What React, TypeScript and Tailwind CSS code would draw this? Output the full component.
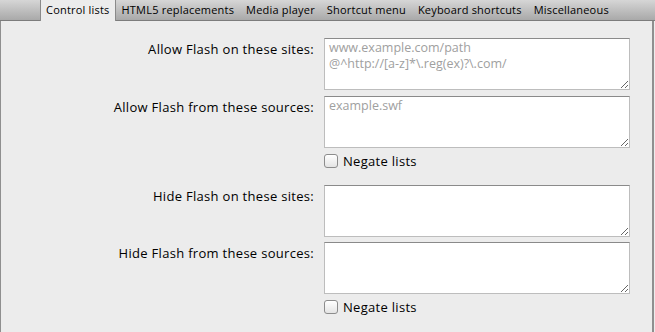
import React from "react";

const TABS = [
  "Control lists",
  "HTML5 replacements",
  "Media player",
  "Shortcut menu",
  "Keyboard shortcuts",
  "Miscellaneous",
];

const FONT = "font-['Open_Sans','Noto_Sans',sans-serif]";

function Field({ label, placeholder }: { label: string; placeholder?: string }) {
  return (
    <div className="flex items-start gap-[10px]">
      <label className="w-[313px] pt-[2px] text-right text-[13px] text-black leading-[18px] tracking-[0.3px]">
        {label}
      </label>
      <textarea
        placeholder={placeholder}
        className="w-[306px] h-[52px] bg-white border border-[#bdbdbd] border-t-[#8a8a8a] px-[4px] py-[1px] text-[12.5px] leading-[16px] text-black placeholder-[#a0a0a0] outline-none"
      />
    </div>
  );
}

function Negate() {
  return (
    <div className="flex items-center gap-[5px] pl-[323px]">
      <span className="w-[14px] h-[14px] rounded-[3px] border border-[#8c8c8c] bg-gradient-to-b from-white to-[#e4e4e4] shadow-[inset_0_1px_0_#fff]" />
      <span className="text-[13px] leading-[16px] text-black tracking-[0.3px]">Negate lists</span>
    </div>
  );
}

export default function App() {
  return (
    <div className={`w-[655px] h-[332px] overflow-hidden bg-[#ececec] ${FONT}`}>
      {/* tab bar */}
      <div className="flex h-[21px] bg-gradient-to-b from-[#d6d6d6] to-[#a9a9a9] border-b border-[#7c7c7c] pl-[40px]">
        {TABS.map((t, i) => (
          <div
            key={t}
            className={
              i === 0
                ? "h-[21px] px-[5px] bg-[#ececec] border-x border-[#8a8a8a] text-[11px] leading-[20px] tracking-[0.2px] text-black"
                : "h-[20px] px-[6px] text-[11px] leading-[20px] tracking-[0.2px] text-black"
            }
          >
            {t}
          </div>
        ))}
      </div>

      {/* content */}
      <div className="h-[311px] border-l border-r-2 border-[#8f8f8f] mr-[1px] pt-[17px] flex flex-col">
        <div className="flex flex-col gap-[6px]">
          <Field label="Allow Flash on these sites:" placeholder={"www.example.com/path\n@^http://[a-z]*\\.reg(ex)?\\.com/"} />
          <Field label="Allow Flash from these sources:" placeholder="example.swf" />
        </div>
        <div className="mt-[5px]">
          <Negate />
        </div>
        <div className="flex flex-col gap-[5px] mt-[16px]">
          <Field label="Hide Flash on these sites:" />
          <Field label="Hide Flash from these sources:" />
        </div>
        <div className="mt-[5px]">
          <Negate />
        </div>
      </div>
    </div>
  );
}
